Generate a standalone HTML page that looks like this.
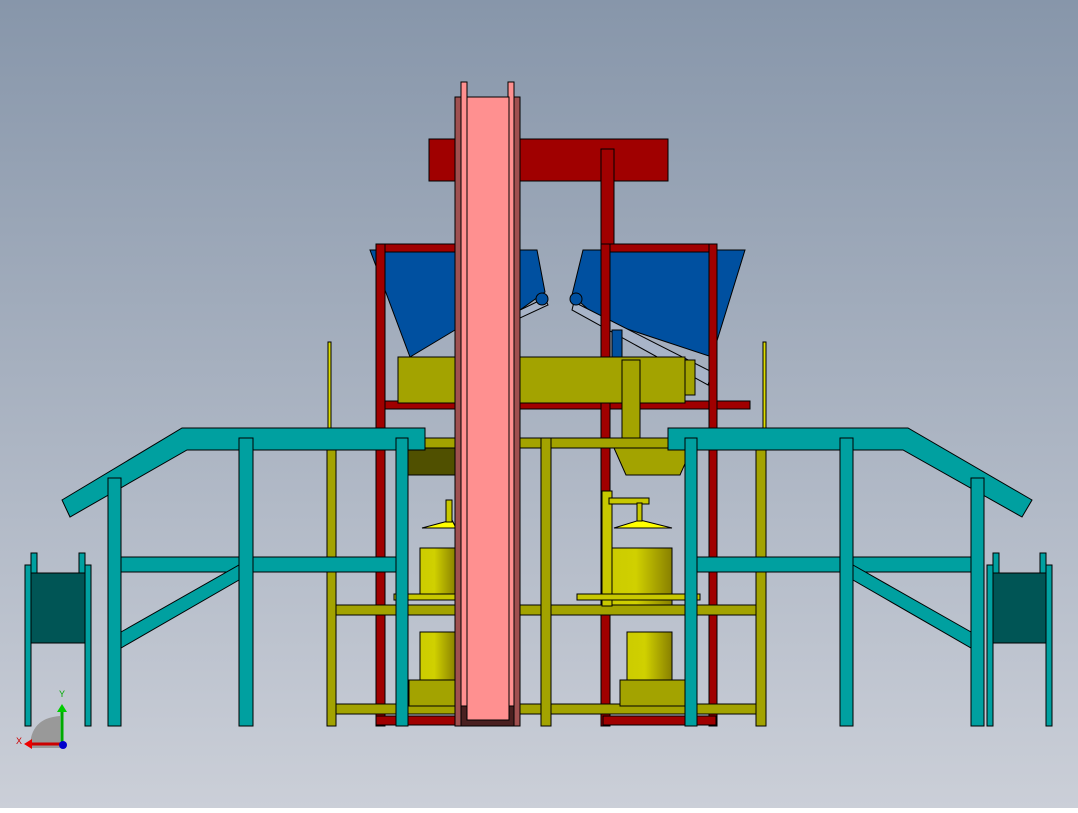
<!DOCTYPE html>
<html><head><style>html,body{margin:0;padding:0}body{width:1078px;height:808px;overflow:hidden}</style></head><body>
<svg width="1078" height="808" viewBox="0 0 1078 808" xmlns="http://www.w3.org/2000/svg">
<defs>
<linearGradient id="bg" x1="0" y1="0" x2="0" y2="1"><stop offset="0" stop-color="#8796aa"/><stop offset="1" stop-color="#cbcfd8"/></linearGradient>
<linearGradient id="cyl" x1="0" y1="0" x2="1" y2="0"><stop offset="0" stop-color="#cccc00"/><stop offset="0.4" stop-color="#d0d000"/><stop offset="1" stop-color="#888000"/></linearGradient>
</defs>
<rect width="1078" height="808" fill="url(#bg)"/>
<g stroke="#000" stroke-width="1">
<rect x="429" y="139" width="239" height="42" fill="#a00000"/>
<rect x="601" y="149" width="13" height="96" fill="#a00000"/>
<polygon points="370,250 455,250 455,330 410,357" fill="#0050a0"/>
<polygon points="520,250 537,250 545,292 520,310" fill="#0050a0"/>
<polygon points="583,250 745,250 712,357 600,320 572,295" fill="#0050a0"/>
<polygon points="574,302 712,372 708,385 572,310" fill="#a8b4c8"/>
<polygon points="520,310 545,298 548,305 520,318" fill="#a8b4c8"/>
<circle cx="542" cy="299" r="6" fill="#0050a0"/><circle cx="576" cy="299" r="6" fill="#0050a0"/>
<rect x="612" y="330" width="10" height="70" fill="#0050a0"/>
<rect x="376" y="244" width="80" height="8" fill="#a00000"/>
<rect x="601" y="244" width="116" height="8" fill="#a00000"/>
<rect x="383" y="401" width="367" height="8" fill="#a00000"/>
<rect x="376" y="244" width="9" height="482" fill="#a00000"/>
<rect x="601" y="244" width="9" height="482" fill="#a00000"/>
<rect x="709" y="244" width="8" height="482" fill="#a00000"/>
<rect x="376" y="716" width="80" height="9" fill="#a00000"/>
<rect x="603" y="716" width="113" height="9" fill="#a00000"/>
<rect x="398" y="357" width="287" height="46" fill="#a3a300"/>
<rect x="685" y="360" width="10" height="35" fill="#a3a300"/>
<rect x="622" y="360" width="18" height="85" fill="#a3a300"/>
<polygon points="614,448 692,448 680,475 626,475" fill="#a3a300"/>
<rect x="408" y="448" width="48" height="27" fill="#505000"/>
<rect x="328" y="342" width="3" height="86" fill="#dddd00"/>
<rect x="763" y="342" width="3" height="86" fill="#dddd00"/>
<rect x="327" y="438" width="439" height="10" fill="#a3a300"/>
<rect x="327" y="605" width="439" height="10" fill="#a3a300"/>
<rect x="327" y="704" width="439" height="10" fill="#a3a300"/>
<rect x="327" y="438" width="9" height="288" fill="#a3a300"/>
<rect x="541" y="438" width="10" height="288" fill="#a3a300"/>
<rect x="756" y="438" width="10" height="288" fill="#a3a300"/>
<rect x="420" y="548" width="36" height="52" fill="url(#cyl)"/>
<rect x="420" y="632" width="36" height="50" fill="url(#cyl)"/>
<rect x="409" y="680" width="47" height="26" fill="#a3a300"/>
<polygon points="422,528 452,520 456,528" fill="#ffff00"/>
<rect x="446" y="500" width="6" height="22" fill="#c8c800"/>
<rect x="394" y="594" width="62" height="6" fill="#c8c800"/>
<rect x="612" y="548" width="60" height="57" fill="url(#cyl)"/>
<rect x="627" y="632" width="45" height="50" fill="url(#cyl)"/>
<rect x="620" y="680" width="66" height="26" fill="#a3a300"/>
<polygon points="614,528 640,520 672,528" fill="#ffff00"/>
<rect x="602" y="491" width="10" height="115" fill="#c8c800"/>
<rect x="609" y="498" width="40" height="6" fill="#c8c800"/>
<rect x="637" y="503" width="5" height="18" fill="#c8c800"/>
<rect x="577" y="594" width="123" height="6" fill="#c8c800"/>
<polygon points="62,500 182,428 425,428 425,450 187,450 70,517" fill="#00a0a0"/>
<rect x="121" y="557" width="287" height="15" fill="#00a0a0"/>
<polygon points="121,632 239,565 239,580 121,648" fill="#00a0a0"/>
<rect x="108" y="478" width="13" height="248" fill="#00a0a0"/>
<rect x="239" y="438" width="14" height="288" fill="#00a0a0"/>
<rect x="396" y="438" width="12" height="288" fill="#00a0a0"/>
<polygon points="1032,500 908,428 668,428 668,450 903,450 1022,517" fill="#00a0a0"/>
<rect x="697" y="557" width="275" height="15" fill="#00a0a0"/>
<polygon points="853,565 971,632 971,648 853,580" fill="#00a0a0"/>
<rect x="971" y="478" width="13" height="248" fill="#00a0a0"/>
<rect x="840" y="438" width="13" height="288" fill="#00a0a0"/>
<rect x="685" y="438" width="12" height="288" fill="#00a0a0"/>
<rect x="25" y="565" width="6" height="161" fill="#00a0a0"/>
<rect x="85" y="565" width="6" height="161" fill="#00a0a0"/>
<rect x="31" y="553" width="6" height="20" fill="#00a0a0"/>
<rect x="79" y="553" width="6" height="20" fill="#00a0a0"/>
<rect x="31" y="573" width="54" height="70" fill="#005555"/>
<rect x="987" y="565" width="6" height="161" fill="#00a0a0"/>
<rect x="1046" y="565" width="6" height="161" fill="#00a0a0"/>
<rect x="993" y="553" width="6" height="20" fill="#00a0a0"/>
<rect x="1040" y="553" width="6" height="20" fill="#00a0a0"/>
<rect x="993" y="573" width="53" height="70" fill="#005555"/>
<rect x="455" y="97" width="65" height="629" fill="#a05050"/>
<rect x="461" y="82" width="6" height="644" fill="#ff9090"/>
<rect x="508" y="82" width="6" height="644" fill="#ff9090"/>
<rect x="461" y="706" width="53" height="20" fill="#4a2020"/>
<rect x="467" y="97" width="42" height="623" fill="#ff9090"/>
</g>
<path d="M30 748 Q30 718 60 716 L60 748 Z" fill="#999"/>
<line x1="62" y1="744" x2="62" y2="710" stroke="#00aa00" stroke-width="3"/>
<polygon points="57,712 67,712 62,704" fill="#00cc00"/>
<line x1="62" y1="744" x2="30" y2="744" stroke="#cc0000" stroke-width="3"/>
<polygon points="32,739 32,749 24,744" fill="#ee0000"/>
<circle cx="63" cy="745" r="4" fill="#0000cc"/>
<text x="16" y="744" font-family="Liberation Sans, sans-serif" font-size="9" fill="#cc0000">X</text>
<text x="59" y="697" font-family="Liberation Sans, sans-serif" font-size="9" fill="#00aa00">Y</text>
</svg>
</body></html>
